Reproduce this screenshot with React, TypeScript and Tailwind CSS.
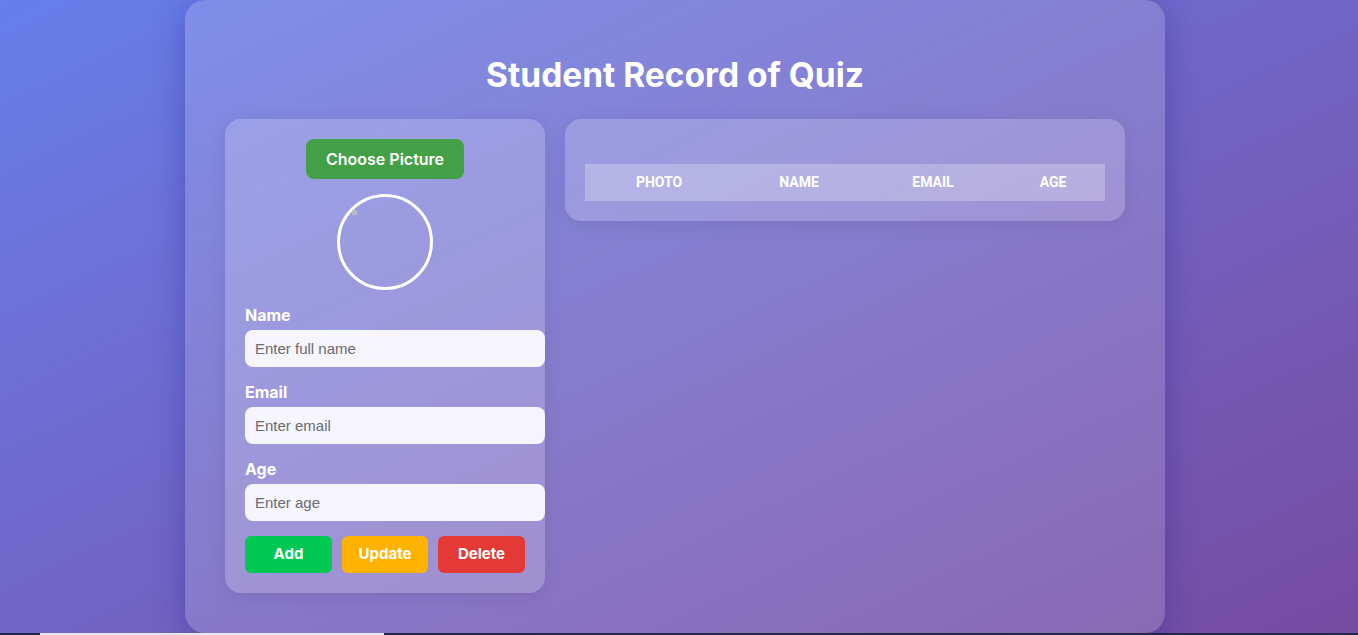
import React from "react";

export default function App() {
  return (
    <div
      className="relative h-[635px] w-full overflow-hidden bg-gradient-to-br from-[#667eea] to-[#764ba2]"
      style={{ fontFamily: "Inter, 'Noto Sans', sans-serif" }}
    >
      <div className="ml-[185px] flex h-[633px] w-[980px] flex-col rounded-[20px] bg-white/15 px-10 pt-[51px] pb-10 shadow-[0_8px_32px_rgba(31,38,135,0.37)]">
        <h1 className="m-0 text-center text-[33.5px] font-bold leading-[48px] text-white">
          Student Record of Quiz
        </h1>
        <div className="mt-5 flex items-start gap-5">
          {/* Left form panel */}
          <div className="flex w-[320px] flex-col rounded-2xl bg-white/20 p-5 shadow-[0_4px_20px_rgba(0,0,0,0.08)]">
            <div className="flex justify-center">
              <button className="h-10 w-[158px] rounded-lg bg-[#43a047] text-[16px] font-semibold text-white">
                Choose Picture
              </button>
            </div>
            <div className="mt-[15px] flex justify-center">
              <div className="relative h-[96px] w-[96px] rounded-full border-[3px] border-white">
                <div className="absolute left-[12px] top-[13px] h-[5px] w-[5px] rounded-[1px] bg-[#b8bcc8]" />
              </div>
            </div>
            <div className="mt-[14px] flex flex-col">
              {[
                ["Name", "Enter full name"],
                ["Email", "Enter email"],
                ["Age", "Enter age"],
              ].map(([label, ph], i) => (
                <div key={label} className={i > 0 ? "mt-[14px]" : ""}>
                  <div className="text-[16px] font-bold leading-[22px] text-white">{label}</div>
                  <input
                    placeholder={ph}
                    className="mt-[4px] h-[37px] w-[300px] rounded-lg bg-[#f5f5fb] px-[10px] text-[15px] text-[#333] outline-none placeholder:text-[#6b6b75]"
                    style={{ fontFamily: "'Liberation Sans', Arial, sans-serif" }}
                  />
                </div>
              ))}
            </div>
            <div className="mt-[15px] flex gap-[10px]">
              <button className="h-[37px] w-[87px] rounded-md bg-[#00c853] text-[15px] font-bold text-white">
                Add
              </button>
              <button className="h-[37px] w-[86px] rounded-md bg-[#ffb300] text-[15px] font-bold text-white">
                Update
              </button>
              <button className="h-[37px] w-[87px] rounded-md bg-[#e53935] text-[15px] font-bold text-white">
                Delete
              </button>
            </div>
          </div>

          {/* Right table panel */}
          <div className="w-[560px] rounded-2xl bg-white/20 px-5 pt-[45px] pb-5 shadow-[0_4px_20px_rgba(0,0,0,0.08)]">
            <table className="w-full border-collapse" style={{ fontFamily: "Roboto, 'Noto Sans', sans-serif" }}>
              <thead>
                <tr className="h-[37px] bg-white/25 text-[14px] font-bold uppercase text-white">
                  <th className="w-[148px] text-center font-bold">Photo</th>
                  <th className="w-[132px] text-center font-bold">Name</th>
                  <th className="w-[136px] text-center font-bold">Email</th>
                  <th className="w-[104px] text-center font-bold">Age</th>
                </tr>
              </thead>
            </table>
          </div>
        </div>
      </div>
      <div className="absolute bottom-0 left-0 flex h-[2px] w-full bg-[#1e2a48]">
        <div className="ml-[40px] h-full w-[344px] bg-[#e8e8ee]" />
      </div>
    </div>
  );
}
